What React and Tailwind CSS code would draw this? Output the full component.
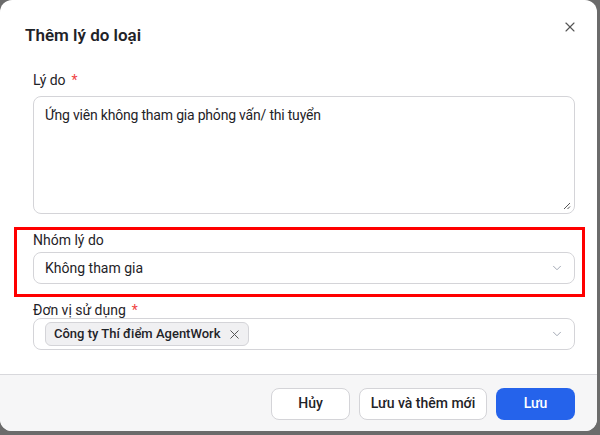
import { X, ChevronDown } from 'lucide-react'

const Label = ({ children, required, className = 'leading-[20px]' }) => (
  <div className={`text-[14px] text-[#1f2328] ${className}`}>
    {children}
    {required && <span className="ml-[6px] text-[#ef4444]">*</span>}
  </div>
)

const Field = ({ label, required, children, className = '', gap = 'gap-[6px]', labelClass }) => (
  <div className={`flex flex-col ${gap} ${className}`}>
    <Label required={required} className={labelClass}>{label}</Label>
    {children}
  </div>
)

const Button = ({ children, primary, className = '' }) => (
  <button
    className={`h-[32px] rounded-[8px] text-[14px] font-medium ${
      primary
        ? 'bg-[#2563eb] text-white'
        : 'bg-white text-[#1f2328] border border-[#d4d4d8]'
    } ${className}`}
  >
    {children}
  </button>
)

export default function App() {
  return (
    <div
      className="w-[600px] h-[435px] bg-[#6b6b6b] overflow-hidden"
      style={{ fontFamily: 'Roboto, "Noto Sans", sans-serif' }}
    >
      <div className="w-[597px] h-[431px] bg-white rounded-[12px] flex flex-col overflow-hidden">
        {/* header */}
        <div className="flex items-start justify-between pl-[25px] pr-[19px] pt-[23px]">
          <h2 className="text-[17px] leading-[24px] font-semibold text-[#1f2328]">Thêm lý do loại</h2>
          <X className="w-[16px] h-[16px] mt-[-4px] text-[#555]" strokeWidth={1.7} />
        </div>

        {/* body */}
        <div className="flex-1 pl-[33px] pr-[22px] pt-[23px]">
          <Field label="Lý do" required>
            <div className="relative h-[118px] rounded-[8px] border border-[#d4d4d8] px-[11px] py-[7px] text-[14px] leading-[22px] tracking-[-0.2px] text-[#1f2328]">
              Ứng viên không tham gia phỏng vấn/ thi tuyển
              <svg className="absolute right-[3px] bottom-[3px] w-[8px] h-[8px]" viewBox="0 0 8 8">
                <path d="M7 1L1 7M7 4.5L4.5 7" stroke="#555" strokeWidth="1" fill="none" />
              </svg>
            </div>
          </Field>

          <Field
            label="Nhóm lý do"
            gap="gap-[2px]"
            className="mt-[13px] ml-[-19px] mr-[-10px] pl-[16px] pr-[7px] pt-0 pb-[10px] border-[3px] border-[#ff0000]"
          >
            <div className="h-[32px] rounded-[8px] border border-[#d4d4d8] flex items-center justify-between pl-[11px] pr-[10px] text-[14px] text-[#1f2328]">
              <span>Không tham gia</span>
              <ChevronDown className="w-[14px] h-[14px] text-[#9ca3af]" strokeWidth={1.6} />
            </div>
          </Field>

          <Field label="Đơn vị sử dụng" required gap="gap-0" labelClass="leading-[16px]" className="mt-[5px]">
            <div className="h-[32px] rounded-[8px] border border-[#d4d4d8] flex items-center justify-between pl-[11px] pr-[10px]">
              <span className="h-[24px] flex items-center gap-[7px] rounded-[6px] border border-[#d4d4d8] bg-[#f0f0f2] pl-[8px] pr-[6px] text-[13px] font-medium text-[#1f2328]">
                Công ty Thí điểm AgentWork
                <X className="w-[15px] h-[15px] text-[#555]" strokeWidth={1.6} />
              </span>
              <ChevronDown className="w-[14px] h-[14px] text-[#9ca3af]" strokeWidth={1.6} />
            </div>
          </Field>
        </div>

        {/* footer */}
        <div className="h-[57px] bg-[#f6f6f7] border-t border-[#d8d8dc] flex items-center justify-end gap-[9px] pr-[22px] pt-[1px]">
          <Button className="w-[79px]">Hủy</Button>
          <Button className="w-[128px]">Lưu và thêm mới</Button>
          <Button primary className="w-[79px]">Lưu</Button>
        </div>
      </div>
    </div>
  )
}
